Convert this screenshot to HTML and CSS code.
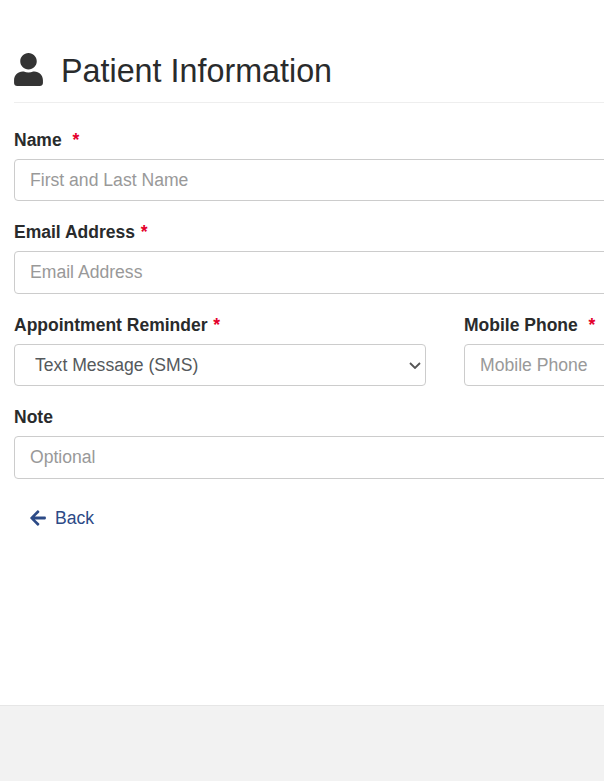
FILE: index.html
```html
<!DOCTYPE html>
<html lang="en">
<head>
    <meta charset="UTF-8">
    <meta name="viewport" content="width=device-width, initial-scale=1.0">
    <title>Patient Information</title>
    <link rel="stylesheet" href="styles.css">
</head>
<body>
    <main class="content">
        <h1 class="page-title">
            <svg class="title-icon" viewBox="0 0 448 512" aria-hidden="true"><path d="M224 256c70.7 0 128-57.3 128-128S294.7 0 224 0 96 57.3 96 128s57.3 128 128 128zm89.6 32h-16.7c-22.2 10.2-46.9 16-72.9 16s-50.6-5.8-72.9-16h-16.7C60.2 288 0 348.2 0 422.4V464c0 26.5 21.5 48 48 48h352c26.5 0 48-21.5 48-48v-41.6c0-74.2-60.2-134.4-134.4-134.4z"/></svg>
            Patient Information
        </h1>

        <form class="patient-form">
            <div class="form-group">
                <label for="name">Name &nbsp;<span class="required">*</span></label>
                <input type="text" id="name" placeholder="First and Last Name">
            </div>

            <div class="form-group">
                <label for="email">Email Address <span class="required">*</span></label>
                <input type="email" id="email" placeholder="Email Address">
            </div>

            <div class="form-row">
                <div class="form-group">
                    <label for="reminder">Appointment Reminder <span class="required">*</span></label>
                    <div class="select-wrap">
                        <select id="reminder">
                            <option>Text Message (SMS)</option>
                            <option>Email</option>
                        </select>
                        <svg class="select-arrow" viewBox="0 0 12 7" aria-hidden="true"><path d="M1 1l5 5 5-5" fill="none" stroke="#555" stroke-width="1.8"/></svg>
                    </div>
                </div>
                <div class="form-group">
                    <label for="mobile">Mobile Phone &nbsp;<span class="required">*</span></label>
                    <input type="tel" id="mobile" placeholder="Mobile Phone">
                </div>
            </div>

            <div class="form-group">
                <label for="note">Note</label>
                <input type="text" id="note" placeholder="Optional">
            </div>

            <a class="back-link" href="#">
                <svg class="back-icon" viewBox="0 0 448 512" aria-hidden="true"><path d="M257.5 445.1l-22.2 22.2c-9.4 9.4-24.6 9.4-33.9 0L7 273c-9.4-9.4-9.4-24.6 0-33.9L201.4 44.7c9.4-9.4 24.6-9.4 33.9 0l22.2 22.2c9.5 9.5 9.3 25-.4 34.3L136.6 216H424c13.3 0 24 10.7 24 24v32c0 13.3-10.7 24-24 24H136.6l120.5 114.8c10 9.3 10.2 24.8.4 34.3z"/></svg>
                Back
            </a>
        </form>
    </main>
    <footer class="page-footer"></footer>
</body>
</html>
```

FILE: styles.css
```css
html, body {
    margin: 0;
    height: 100%;
    overflow: hidden;
}

body {
    font-family: 'Liberation Sans', Arial, sans-serif;
    color: #292b2c;
    background-color: #f2f2f2;
    display: flex;
    flex-direction: column;
}

.content {
    height: 705px;
    box-sizing: border-box;
    background-color: #fff;
    padding: 53px 0 0 14px;
    flex: none;
    width: 890px;
}

.page-title {
    display: flex;
    align-items: flex-start;
    gap: 18px;
    margin: 0;
    height: 33px;
    padding-bottom: 16px;
    border-bottom: 1px solid #eee;
    font-size: 32.3px;
    line-height: 37px;
    font-weight: 400;
    color: #292b2c;
}

.title-icon {
    width: 29px;
    height: 33px;
    fill: #343434;
}

.patient-form {
    width: 862px;
    padding-top: 26.6px;
}

.form-group {
    margin-bottom: 20.6px;
}

.form-row {
    display: grid;
    grid-template-columns: 412px 412px;
    gap: 38px;
}

label {
    display: block;
    margin-bottom: 9.4px;
    font-size: 17.5px;
    line-height: 20px;
    font-weight: bold;
}

.form-row label {
    padding-top: 1px;
    margin-bottom: 8.4px;
}

.required {
    margin-left: 1px;
    color: #e4002b;
}

input, select {
    display: block;
    width: 100%;
    height: 42.4px;
    box-sizing: border-box;
    padding: 6px 15px;
    border: 1px solid #ccc;
    border-radius: 4px;
    background-color: #fff;
    font-family: inherit;
    font-size: 17.6px;
    color: #55595c;
}

input::placeholder {
    color: #999;
    opacity: 1;
}

.form-row input {
    padding-top: 7px;
    padding-bottom: 5px;
}

select {
    appearance: none;
    padding-left: 20px;
}

.select-wrap {
    position: relative;
}

.select-arrow {
    position: absolute;
    top: 18px;
    right: 5px;
    width: 12px;
    height: 7px;
    pointer-events: none;
}

.back-link {
    display: inline-flex;
    align-items: center;
    gap: 9px;
    margin: 9px 0 0 16px;
    font-size: 17.6px;
    color: #2c4a86;
    text-decoration: none;
}

.back-icon {
    width: 16px;
    height: 18px;
    margin-top: -2px;
    fill: currentColor;
}

.page-footer {
    flex: 1;
    background-color: #f2f2f2;
    border-top: 1px solid #e6e6e6;
}
```
